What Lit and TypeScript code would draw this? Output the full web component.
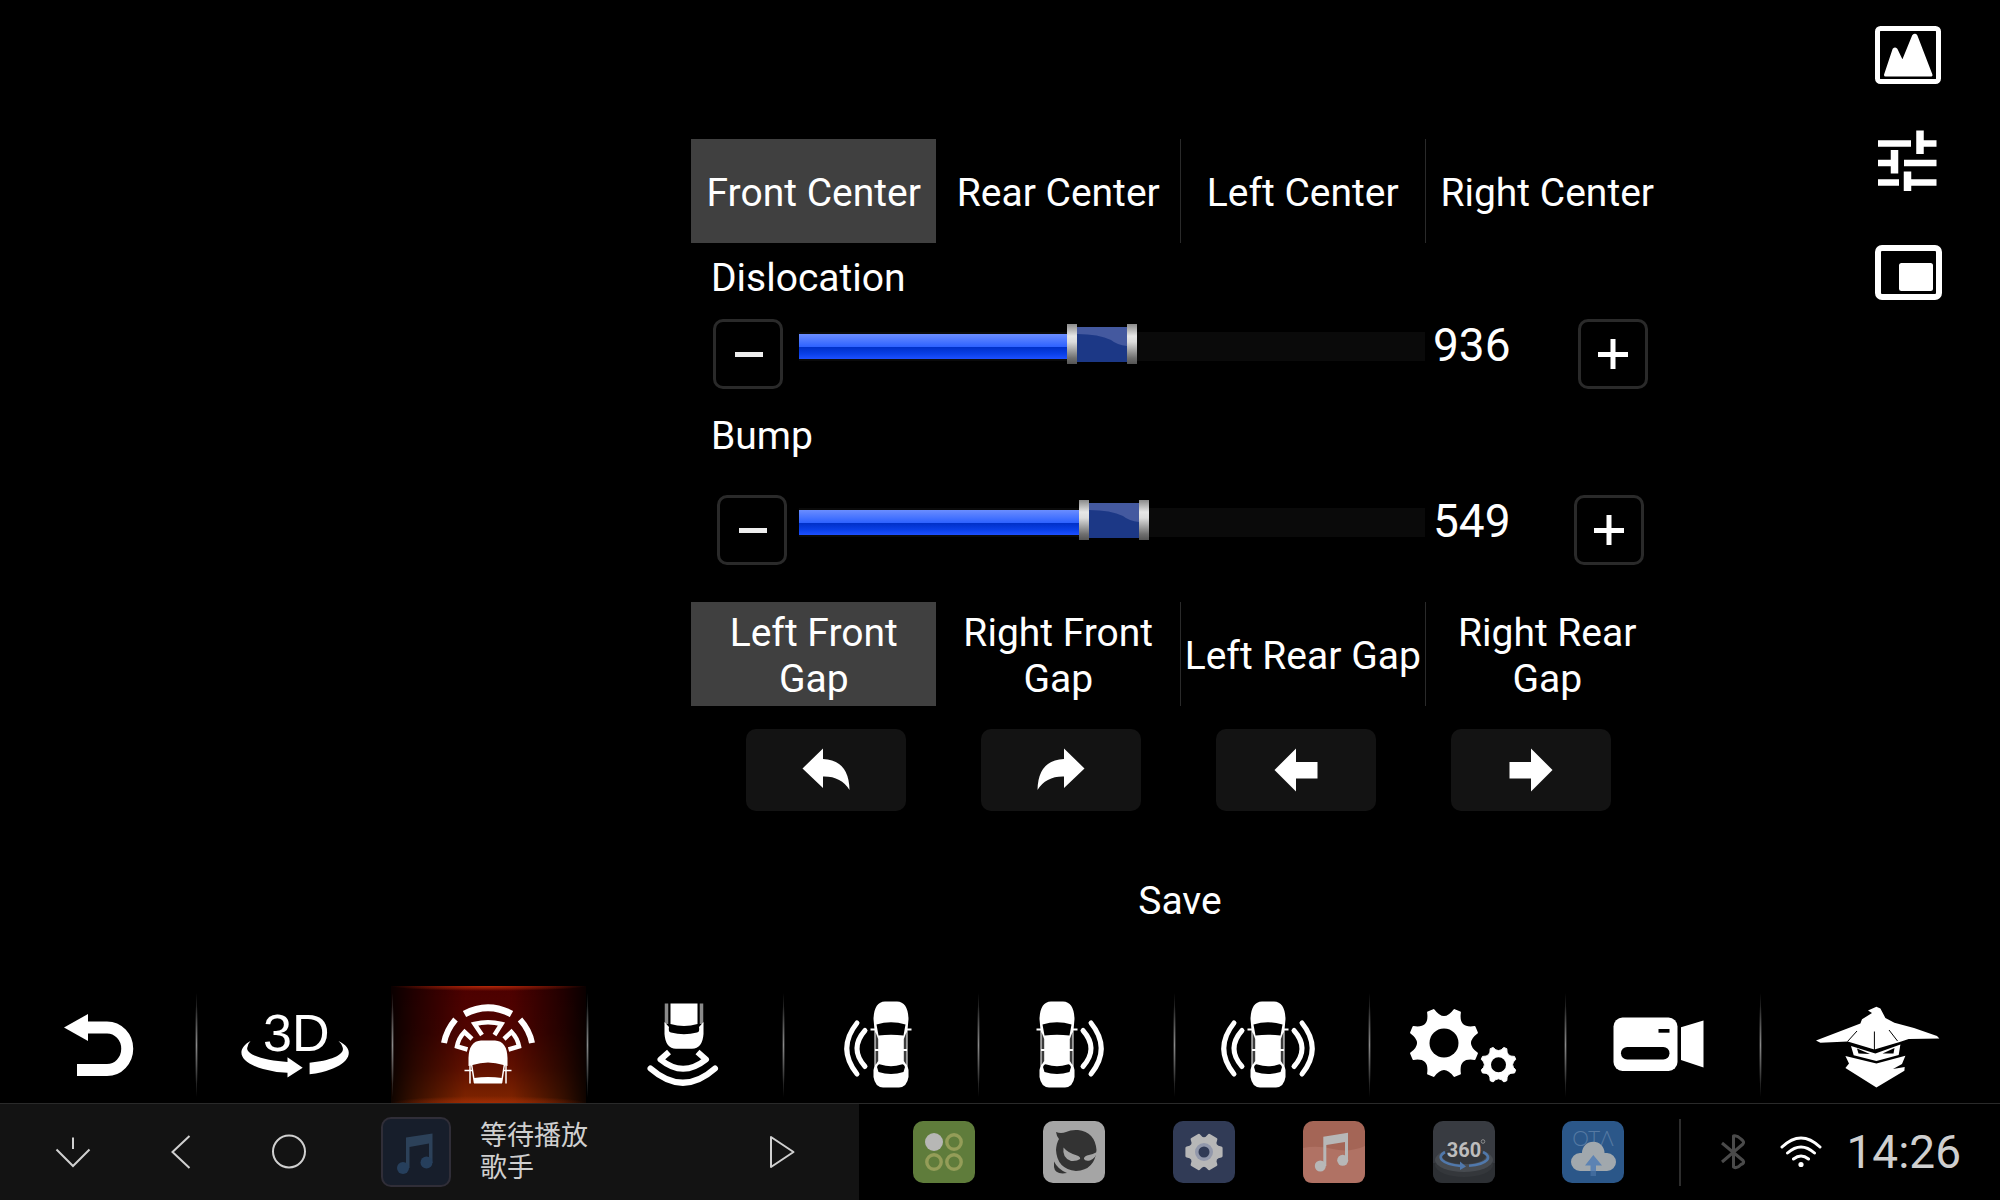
import { LitElement, html, svg, css } from "lit";
import { customElement, property, state } from "lit/decorators.js";
import { classMap } from "lit/directives/class-map.js";
import { styleMap } from "lit/directives/style-map.js";

/** Path of a cog with scalloped gaps between its teeth. */
function cog(cx: number, cy: number, teeth: number, tip: number, valley: number, half: number, phase: number) {
  const at = (deg: number, r: number) => {
    const a = (deg * Math.PI) / 180;
    return `${(cx + Math.cos(a) * r).toFixed(1)} ${(cy + Math.sin(a) * r).toFixed(1)}`;
  };
  const step = 360 / teeth;
  let d = `M${at(phase - half, tip)}`;
  for (let i = 0; i < teeth; i++) {
    const a = phase + i * step;
    d += `L${at(a + half, tip)}Q${at(a + step / 2, valley)} ${at(a + step - half, tip)}`;
  }
  return d + "Z";
}

/** Car seen from above, centred on x = cx. */
const car = (cx: number) => svg`
  <g transform="translate(${cx} 0)">
    <path fill="#fff" d="M-17.500 33Q-17 16 -6 15.500H6Q17 16 17.500 33L16.500 44V80L17.500 84V91Q16 101 8 101.500H-8Q-16 101 -17.500 91V84L-16.500 80V44Z"/>
    <path fill="#000" d="M-14.500 38.500Q0 34 14.500 38.500L12.500 49.500Q0 48 -12.500 49.500Z"/>
    <path fill="#000" d="M-14 81Q-13 77.500 -10.500 78.500Q0 82 10.500 78.500Q13 77.500 14 81L12.500 86Q0 90 -12.500 86Z"/>
    <path fill="#3c3c3c" d="M-15.500 46L-12.800 53V75L-15.500 79ZM15.500 46L12.800 53V75L15.500 79Z"/>
    <path stroke="#fff" stroke-width="2" fill="none" d="M-20.500 43.500H-15M15 43.500H20.500M-16 64H-12M12 64H16"/>
  </g>`;

/** Sonar waves on one side of a car: dir is -1 for left, 1 for right. */
const waves = (cx: number, dir: number) => svg`
  <g transform="translate(${cx} 0) scale(${dir} 1)" fill="none" stroke="#fff" stroke-width="5" stroke-linecap="round">
    <path d="M26 44.500Q42 62.500 26 80.500"/>
    <path d="M34 37Q54.500 62.500 34 88"/>
  </g>`;

const nav: { name: string; art: unknown }[] = [
  {
    name: "Back",
    art: svg`<path fill="#fff" d="M64 41.500L88 28V55Z"/><path fill="none" stroke="#fff" stroke-width="12" d="M86 41.500H107A20 21 0 0 1 107 84H77"/>`,
  },
  {
    name: "3D view",
    art: svg`<text class="three-d" x="67" y="65">3D</text>
      <path fill="#fff" d="M54.500 55C40 63 42 76 67 83Q79 86.500 91.500 86.700V91.500L106.700 81.700L91.500 71.300V76C71 75 48 69 51.500 61Q52.500 57 54.500 55Z"/>
      <path fill="#fff" d="M142.500 55C158 62 156 75 137 82.500Q126 87 113.600 88.300V76.700C133 75 150 69 146.500 61Q145 57 142.500 55Z"/>`,
  },
  {
    name: "Front view",
    art: svg`<g fill="none" stroke="#fff">
        <path stroke-width="7" d="M73.500 28Q97 15.500 120.500 28"/>
        <path stroke-width="6" d="M64.500 33.500Q55.500 44 53 57M129 33.500Q138.500 44 141 57"/>
        <path stroke-width="4.500" d="M91 49L83.500 38Q97 34.500 110.500 38L103.500 49"/>
        <path stroke-width="4.500" d="M76.500 63.500L66 60.500Q67.500 52 73.500 46L81 53M117.500 63.500L128 60.500Q126.500 52 120.500 46L113 53"/>
        <path stroke-width="1.500" d="M73.500 84.500H81M113 84.500H120.500M79 77V97.500M115 77V97.500M80.500 78L83.500 97M113.500 78L110.500 97"/>
      </g>
      <path fill="#fff" d="M77.500 72Q78 55 90 54.500H104Q116 55 116.500 72V80L112.500 79Q97 74 81.500 79L77.500 80Z"/>
      <path fill="#fff" d="M83 92Q97 90 111 92V97.500H83Z"/>`,
  },
  {
    name: "Rear view",
    art: svg`<path fill="#fff" d="M83.500 17.500H110.500V38Q97 42 83.500 38Z"/>
      <path fill="none" stroke="#8a8a8a" stroke-width="3.500" d="M79.500 17.500V38M114.500 17.500V38"/>
      <path fill="#fff" d="M77.500 36L82 41Q81 46 84 46.500Q97 50 110 46.500Q113 46 112 41L116.500 36V48Q115.500 62.500 105 62.700H89Q78.500 62.500 77.500 48Z"/>
      <g fill="none" stroke="#fff" stroke-width="6" stroke-linejoin="round">
        <path d="M82 66L73.500 73.500Q96 92 119 73.500L110.500 66"/>
        <path stroke-linecap="round" d="M63.500 82.500Q96 111 128 82.500"/>
      </g>`,
  },
  { name: "Left view", art: svg`${car(109)}${waves(109, -1)}` },
  { name: "Right view", art: svg`${car(80)}${waves(80, 1)}` },
  { name: "Side view", art: svg`${waves(95, -1)}${car(95)}${waves(95, 1)}` },
  {
    name: "Settings",
    art: svg`<path fill="#fff" stroke="#fff" stroke-width="2" stroke-linejoin="round" d=${cog(76, 57, 8, 34.5, 19, 5, 22.5)}/>
      <circle cx="76" cy="57" r="14.500" fill="#000"/>
      <path fill="#fff" stroke="#fff" stroke-width="1" stroke-linejoin="round" d=${cog(130.5, 78.700, 8, 18, 11, 5, 22.5)}/>
      <circle cx="130.500" cy="78.700" r="7.500" fill="#000"/>`,
  },
  {
    name: "Record",
    art: svg`<rect x="49.500" y="31.500" width="64" height="53.500" rx="9" fill="#fff"/>
      <rect x="57" y="61" width="48.500" height="12.500" rx="6.200" fill="#000"/>
      <rect x="94.500" y="43" width="11" height="3.700" fill="#000"/>
      <path fill="#fff" d="M117 41.300L139.500 34.500V81.500L117 74Z"/>`,
  },
  {
    name: "Guard",
    art: svg`<path fill="#fff" d="M117.400 20.700L109 24.500L113 27L103 33.300L101.400 37.500L57 54.500L61.400 56.700L88.700 55.500L115.400 63.500L140.700 56L149.700 53L180.400 52.500L178 50L155 42L135.400 36.700L126.400 32L121.400 22.500Z"/>
      <path fill="none" stroke="#000" d="M115.400 45.500V64M130 44L138.500 55M98 45L88.500 55.500"/>
      <path fill="#fff" d="M92 60L116.400 67.500L141.400 58.500L139.700 69L117.400 75L94.700 69.300Z"/>
      <path fill="#000" d="M98 62.500L111 68L99.500 67.500ZM135.500 62L123.500 67.500L134.500 67.500Z"/>
      <path fill="#fff" d="M86.400 70L117.400 77.500L146.400 69.700L143 78L134 83L145.700 81L145.400 84.700L117.400 101.500L86.400 82L90 77.500Z"/>`,
  },
];

const tile = (fill: string, art: unknown) => html`<svg width="62" height="62" viewBox="0 0 62 62">
  <rect width="62" height="62" rx="10" fill=${fill}></rect>${art}
</svg>`;

const apps: { name: string; art: unknown }[] = [
  {
    name: "All apps",
    art: tile("#5f7c3b", svg`<circle cx="21" cy="21" r="9" fill="#b7b7b5"/>
      <g fill="none" stroke="#949d58" stroke-width="3.400"><circle cx="41" cy="21" r="7.200"/><circle cx="21" cy="41" r="7.200"/><circle cx="41" cy="41" r="7.200"/></g>`),
  },
  {
    name: "Dash camera",
    art: tile("#a5a5a5", svg`<path fill="#333" d="M13 11Q18 13 23 11Q28 8.500 35 9Q52 11 53.500 29Q52 49 33 50Q14 48 13 29Q13.500 22 16 18Q13.500 15 13 11Z"/>
      <path fill="#a5a5a5" d="M20.500 26.500Q25 32 34 34.500Q38 36 37 38Q34 40.500 28 40Q19 37 20.500 26.500ZM54 31Q50 33.500 44 34.500Q40.500 36 41 38Q42 40.500 47 39.500Q53 37 54 31Z"/>
      <path fill="#333" d="M11 40.500Q15 48.500 24 52Q12 54 11 46Z"/>`),
  },
  {
    name: "System settings",
    art: tile("#313b56", svg`<path fill="#b7b7b7" stroke="#b7b7b7" stroke-width="3" stroke-linejoin="round" d=${cog(31, 31, 6, 17.5, 10, 13, 0)}/>
      <circle cx="31" cy="31" r="9" fill="#9298ab"/><circle cx="31" cy="31" r="5.500" fill="#313b56"/>`),
  },
  {
    name: "Music",
    art: tile("#a46556", svg`<path fill="#b07264" d="M0 27Q14 24 30 28T62 25V52Q62 62 52 62H10Q0 62 0 52Z"/>
      <path fill="#b7b7b7" d="M20.300 15.700L45 11.700V38H42V21L23.300 24V45H20.300Z"/>
      <circle cx="17.300" cy="45" r="5.500" fill="#b7b7b7"/><circle cx="39.700" cy="39.300" r="5.500" fill="#b7b7b7"/>`),
  },
  {
    name: "360 camera",
    art: tile("#383b41", svg`<path fill="#2d3034" d="M0 42H62V52Q62 62 52 62H10Q0 62 0 52Z"/>
      <ellipse cx="31" cy="44" rx="29" ry="12" fill="#34373b"/><ellipse cx="31" cy="39" rx="29" ry="12" fill="#474b50"/><ellipse cx="31" cy="35" rx="22" ry="8" fill="#34373b"/>
      <text class="t360" x="31" y="36">360</text>
      <circle cx="50" cy="20.500" r="1.800" fill="none" stroke="#8d8d8d"/>
      <path fill="none" stroke="#5078ab" stroke-width="2.600" d="M12 31C3 36 8 43 28 45M50 31C60 36 55 43 36 44.700"/>
      <path fill="#5078ab" d="M27 40.500L33 45.500L27 49Z"/>`),
  },
  {
    name: "Updates",
    art: tile("#2b5789", svg`<text class="ota" x="31" y="25">OTΛ</text>
      <path fill="#a1a8ad" d="M18 50A9 9 0 0 1 18 32H20A11 11 0 0 1 42.500 32H45A9 9 0 0 1 45 50Z"/>
      <path fill="#5d83b3" d="M31.300 34L40 44.500H34V50H28.500V44.500H23Z"/><path fill="#416b9d" d="M28.500 50H34V55H28.500Z"/>`),
  },
];

const jogs: { name: string; d: string }[] = [
  { name: "Rotate left", d: "M-23.500 -1.500L-3 -21.500V-11Q23 -10 23.500 20Q15 6 -3 6.500V18Z" },
  { name: "Rotate right", d: "M23.500 -1.500L3 -21.500V-11Q-23 -10 -23.500 20Q-15 6 3 6.500V18Z" },
  { name: "Move left", d: "M-21.500 0L0 -21.500V-8H21.500V8.500H0V21.500Z" },
  { name: "Move right", d: "M21.500 0L0 -21.500V-8H-21.500V8.500H0V21.500Z" },
];

@customElement("value-row")
export class ValueRow extends LitElement {
  @property() label = "";
  @property({ type: Number }) value = 0;
  @property({ type: Number }) max = 100;

  static styles = css`
    :host {
      display: grid;
      grid-template-columns: 1fr;
      --inset: 22px;
      --label-gap: 18px;
    }
    .label {
      padding-left: 20px;
      font-size: 39px;
      line-height: 46px;
      margin-bottom: var(--label-gap);
    }
    .row {
      display: grid;
      grid-template-columns: 108px 1fr 136px 108px;
      align-items: start;
    }
    .step {
      box-sizing: border-box;
      width: 70px;
      height: 70px;
      padding: 0;
      margin-left: var(--inset);
      border: 3px solid #2a2a2a;
      border-radius: 10px;
      background: none;
      display: grid;
      place-items: center;
    }
    .step.plus {
      justify-self: end;
      margin-right: calc(var(--inset) - 1px);
    }
    .value {
      padding-left: 8px;
      font-size: 46px;
      line-height: 52px;
    }
    .slider {
      appearance: none;
      -webkit-appearance: none;
      width: 100%;
      height: 50px;
      margin: 0;
      background: none;
    }
    .slider::-webkit-slider-runnable-track {
      height: 40px;
      background:
        linear-gradient(#6a8dff, #2f63ff 50%, #0030c8 53%, #0a40e8 80%, #1e50ff) 0 10px / calc((100% - 70px) * var(--ratio) + 10px) 25px no-repeat,
        linear-gradient(#0a0a0a, #0a0a0a) 0 8px / 100% 29px no-repeat;
    }
    .slider::-webkit-slider-thumb {
      -webkit-appearance: none;
      width: 70px;
      height: 40px;
      border: 0;
      background:
        linear-gradient(#8a8a8a, #e6e6e6 30%, #dcdcdc 45%, #707070 85%, #555) 0 0 / 10px 40px no-repeat,
        linear-gradient(#8a8a8a, #e6e6e6 30%, #dcdcdc 45%, #707070 85%, #555) 60px 0 / 10px 40px no-repeat,
        url("data:image/svg+xml,%3Csvg xmlns='http://www.w3.org/2000/svg' width='50' height='35'%3E%3Cpath fill='%231c3886' d='M0 0H50V35H0Z'/%3E%3Cpath fill='%2344599f' d='M0 0H50V19Q40 18 34 13Q22 7 0 7Z'/%3E%3C/svg%3E") 10px 3px / 50px 35px no-repeat;
    }
  `;

  private move(by: number) {
    this.value = Math.max(0, Math.min(this.max, this.value + by));
  }

  render() {
    return html`
      <label class="label" for="slider">${this.label}</label>
      <div class="row">
        <button class="step" aria-label="Decrease ${this.label}" @click=${() => this.move(-1)}>
          <svg width="30" height="30" viewBox="0 0 30 30"><path stroke="#eee" stroke-width="5" d="M2 15.500H30" /></svg>
        </button>
        <input
          id="slider"
          class="slider"
          type="range"
          min="0"
          max=${this.max}
          .value=${String(this.value)}
          style=${styleMap({ "--ratio": String(this.value / this.max) })}
          @input=${(e: Event) => (this.value = Number((e.target as HTMLInputElement).value))}
        />
        <output class="value" for="slider">${this.value}</output>
        <button class="step plus" aria-label="Increase ${this.label}" @click=${() => this.move(1)}>
          <svg width="30" height="30" viewBox="0 0 30 30"><path stroke="#fff" stroke-width="5" d="M0 15.500H30M15 0V30" /></svg>
        </button>
      </div>
    `;
  }
}

@customElement("app-root")
export class AppRoot extends LitElement {
  @state() private center = 0;
  @state() private gap = 0;
  @state() private view = 2;

  static styles = css`
    :host {
      display: flex;
      flex-direction: column;
      min-height: 100vh;
      background: #000;
      color: #fff;
      font-family: Roboto, "Noto Sans CJK SC", sans-serif;
    }
    button {
      font: inherit;
      color: inherit;
      background: none;
      border: 0;
      padding: 0;
      margin: 0;
      cursor: pointer;
    }
    svg {
      display: block;
    }
    .stage {
      flex: 1;
      display: grid;
      grid-template-columns: 691fr 978fr 331fr;
    }
    .panel {
      grid-column: 2;
      padding-top: 139px;
      display: flex;
      flex-direction: column;
    }
    .tabs {
      display: grid;
      grid-template-columns: repeat(4, 1fr);
    }
    .tab {
      height: 104px;
      padding-top: 3px;
      border-left: 1px solid #2a2a2a;
      font-size: 39px;
      line-height: 46px;
    }
    .tab:first-child,
    .tab.on + .tab {
      border-left-color: transparent;
    }
    .tab.on {
      background: #404040;
    }
    .first {
      margin-top: 12px;
    }
    .second {
      margin: 24px 0 37px;
      --inset: 26px;
      --label-gap: 36px;
    }
    .jogs {
      display: flex;
      justify-content: center;
      gap: 75px;
      margin-top: 23px;
      padding-right: 4px;
    }
    .jog {
      width: 160px;
      height: 82px;
      border-radius: 10px;
      background: #131313;
      display: grid;
      place-items: center;
    }
    .save {
      align-self: center;
      margin-top: 67px;
      font-size: 39px;
      line-height: 46px;
    }
    .tools {
      padding: 20px 58px 0 0;
      display: flex;
      flex-direction: column;
      align-items: flex-end;
      gap: 39px;
    }
    .views {
      display: grid;
      grid-template-columns: repeat(9, 1fr) 241px;
    }
    .view {
      --rule: radial-gradient(ellipse 50% 50% at center, #8a8a8a, transparent) 0 7px / 3px 104px no-repeat;
      height: 117px;
      display: grid;
      place-items: center;
      background: var(--rule);
    }
    .view:first-child {
      background: none;
    }
    .view.on {
      background:
        var(--rule),
        radial-gradient(ellipse 50% 100% at 50% 0, #b82a0a, transparent) 0 0 / 100% 5px no-repeat,
        radial-gradient(ellipse 50% 100% at 50% 100%, #a02c04, transparent) 0 100% / 100% 7px no-repeat,
        linear-gradient(90deg, #000000e0, #00000090 12%, transparent 38%, transparent 62%, #00000090 88%, #000000e0),
        linear-gradient(#4c0000, #500400 40%, #601000 70%, #802600);
    }
    .three-d {
      font: 52px "Liberation Sans", sans-serif;
      fill: #fff;
    }
    .t360 {
      font: bold 20px "Liberation Sans Narrow", Roboto, sans-serif;
      fill: #bdbdbd;
      text-anchor: middle;
    }
    .ota {
      font: 300 21px Lato, sans-serif;
      fill: #567aa3;
      text-anchor: middle;
    }
    .status {
      height: 96px;
      border-top: 1px solid #2a2a2a;
      display: grid;
      grid-template-columns: 859fr 1141fr;
    }
    .left {
      background: #131313;
      display: flex;
      align-items: center;
      padding: 0 23px 0 19px;
    }
    .sys {
      width: 108px;
      height: 96px;
      display: grid;
      place-items: center;
    }
    .cover {
      margin-left: 38px;
    }
    .track {
      flex: 1;
      margin-left: 29px;
      color: #cfcfcf;
      font-size: 27px;
      line-height: 32px;
    }
    .line {
      margin: 0;
    }
    .right {
      display: flex;
      align-items: center;
      padding: 0 39px 0 54px;
    }
    .apps {
      flex: 1;
      display: flex;
      justify-content: space-between;
    }
    .rule {
      width: 2px;
      height: 67px;
      margin: 0 38px 0 55px;
      background: #2d2d2d;
    }
    .radios {
      display: flex;
      gap: 32px;
      margin-right: 23px;
    }
    .clock {
      color: #cfcfcf;
      font-size: 46px;
      line-height: 54px;
    }
  `;

  private tabs(names: string[], active: number, pick: (i: number) => void) {
    return html`<div class="tabs" role="tablist">
      ${names.map(
        (n, i) => html`<button
          class=${classMap({ tab: true, on: i === active })}
          role="tab"
          aria-selected=${i === active}
          @click=${() => pick(i)}
        >${n}</button>`
      )}
    </div>`;
  }

  private tools() {
    return html`<aside class="tools">
      <button aria-label="Picture">
        <svg width="68" height="70" viewBox="0 0 68 70">
          <rect x="3.500" y="8.500" width="61" height="53" rx="3" fill="none" stroke="#fff" stroke-width="5" />
          <path fill="#fff" stroke="#fff" stroke-width="3" stroke-linejoin="round" d="M11.500 55L20 29.500Q21 28.500 22 29.500L28.500 43L39.500 16Q41 14.500 42 16L57 55Z" />
        </svg>
      </button>
      <button aria-label="Adjust">
        <svg width="68" height="70" viewBox="0 0 68 70">
          <path fill="none" stroke="#fff" stroke-width="6.500" d="M4 14.500H37M48 14.500H62.500M4 34H20M30 34H62.500M4 53.500H25M34 53.500H62.500" />
          <path fill="none" stroke="#fff" stroke-width="7.500" d="M46 1.500V25M20.500 21V44.500M33.500 42.500V62" />
        </svg>
      </button>
      <button aria-label="Picture in picture">
        <svg width="68" height="70" viewBox="0 0 68 70">
          <rect x="4" y="10" width="61" height="49" rx="4" fill="none" stroke="#fff" stroke-width="6" />
          <rect x="25" y="25" width="34" height="28" rx="2.500" fill="#fff" />
        </svg>
      </button>
    </aside>`;
  }

  render() {
    return html`
      <main class="stage">
        <section class="panel">
          ${this.tabs(["Front Center", "Rear Center", "Left Center", "Right Center"], this.center, (i) => (this.center = i))}
          <value-row class="first" label="Dislocation" .value=${936} .max=${1945}></value-row>
          <value-row class="second" label="Bump" .value=${549} .max=${1092}></value-row>
          ${this.tabs(["Left Front Gap", "Right Front Gap", "Left Rear Gap", "Right Rear Gap"], this.gap, (i) => (this.gap = i))}
          <div class="jogs">
            ${jogs.map(
              (j) => html`<button class="jog" aria-label=${j.name}>
                <svg width="50" height="50" viewBox="-25 -25 50 50"><path fill="#fff" d=${j.d} /></svg>
              </button>`
            )}
          </div>
          <button class="save">Save</button>
        </section>
        ${this.tools()}
      </main>
      <nav class="views">
        ${nav.map(
          (v, i) => html`<button
            class=${classMap({ view: true, on: i === this.view })}
            aria-label=${v.name}
            @click=${() => (this.view = i)}
          >
            <svg width=${i === 9 ? 241 : 195} height="117" viewBox="0 0 ${i === 9 ? 241 : 195} 117">${v.art}</svg>
          </button>`
        )}
      </nav>
      <footer class="status">
        <div class="left">
          <button class="sys" aria-label="Hide">
            <svg width="40" height="40" viewBox="0 0 40 40"><path fill="none" stroke="#d0d0d0" stroke-width="2" d="M20 5.500V17M3.500 17.500L20 34L36.500 17.500" /></svg>
          </button>
          <button class="sys" aria-label="Previous screen">
            <svg width="40" height="40" viewBox="0 0 40 40"><path fill="none" stroke="#d0d0d0" stroke-width="2" d="M28.500 4L11.500 20L28.500 36" /></svg>
          </button>
          <button class="sys" aria-label="Home">
            <svg width="40" height="40" viewBox="0 0 40 40"><circle cx="20" cy="19.500" r="16" fill="none" stroke="#d0d0d0" stroke-width="2" /></svg>
          </button>
          <svg class="cover" width="70" height="70" viewBox="0 0 70 70">
            <rect x="1" y="1" width="68" height="68" rx="9" fill="#171e2b" stroke="#302e38" stroke-width="2" />
            <path fill="#2c4159" d="M25 20.500L51.500 16.500V46H48V26.500L28.500 30V51H25Z" />
            <circle cx="22" cy="51" r="6" fill="#263f5c" /><circle cx="45.500" cy="45.500" r="6" fill="#263f5c" />
          </svg>
          <div class="track">
            <p class="line">等待播放</p>
            <p class="line">歌手</p>
          </div>
          <button class="sys" aria-label="Play">
            <svg width="40" height="40" viewBox="0 0 40 40"><path fill="none" stroke="#d0d0d0" stroke-width="2" stroke-linejoin="round" d="M9 5L31.500 20L9 35Z" /></svg>
          </button>
        </div>
        <div class="right">
          <div class="apps">${apps.map((a) => html`<button aria-label=${a.name}>${a.art}</button>`)}</div>
          <div class="rule"></div>
          <div class="radios">
            <svg width="28" height="40" viewBox="0 0 28 40"><path fill="none" stroke="#4a4a4a" stroke-width="3" stroke-linejoin="round" d="M3 11L24 28.500Q26 31 22 32.500Q18 37 14.500 35V4Q18 3 22 7Q26 10 24 12L3 30" /></svg>
            <svg width="44" height="40" viewBox="0 0 44 40">
              <path fill="none" stroke="#fff" stroke-width="3" stroke-linecap="round" d="M3 15Q22 -3 41 15M8.500 21Q22 9 35.500 21M14.500 27Q22 21 29.500 27" />
              <circle cx="22" cy="32.500" r="2.600" fill="#fff" />
            </svg>
          </div>
          <time class="clock">14:26</time>
        </div>
      </footer>
    `;
  }
}
